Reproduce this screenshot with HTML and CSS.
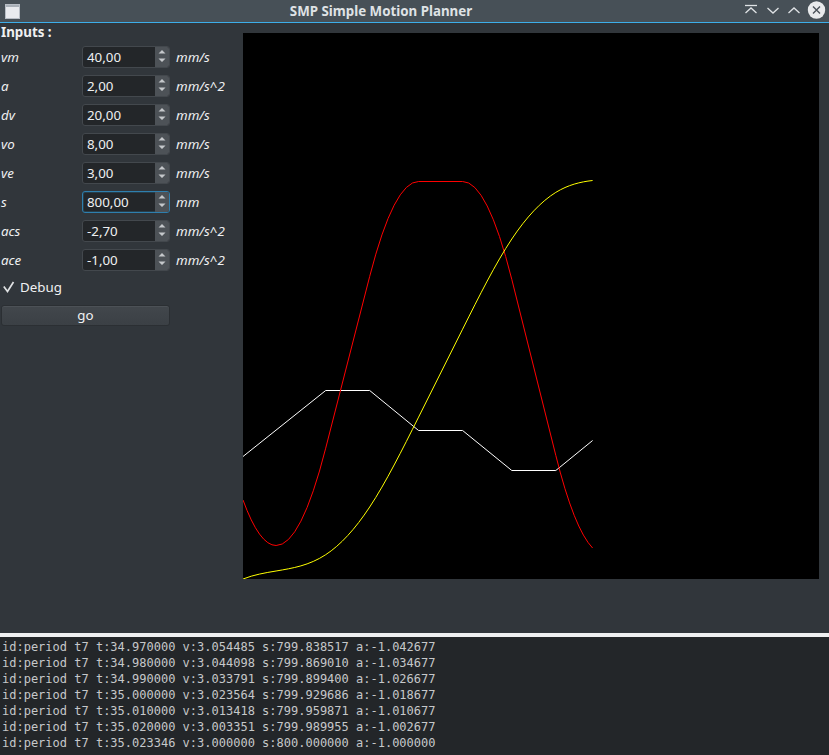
FILE: index.html
```html
<!DOCTYPE html>
<html>
<head>
<meta charset="utf-8">
<title>SMP Simple Motion Planner</title>
<link rel="stylesheet" href="styles.css">
</head>
<body>
<div class="window">
  <header class="titlebar">
    <div class="app-icon">
      <svg width="16" height="16" viewBox="0 0 16 16"><rect x="1.5" y="1.5" width="14" height="14" fill="#e9ebef" stroke="#b8bec6"/><rect x="2" y="2" width="13" height="2" fill="#a9b0b8"/></svg>
    </div>
    <div class="title">SMP Simple Motion Planner</div>
    <div class="controls">
      <svg width="89" height="22" viewBox="740 0 89 22">
        <g fill="none" stroke="#dfe2e5" stroke-width="1.3">
          <path d="M745 5.5 H757"/>
          <path d="M745.5 13 L751 8 L756.5 13"/>
          <path d="M767.5 8 L773 13 L778.5 8"/>
          <path d="M788.5 13 L794 8 L799.5 13"/>
        </g>
        <circle cx="816.5" cy="10" r="8.7" fill="#e8eaec"/>
        <path d="M813 6.5 L820 13.5 M820 6.5 L813 13.5" stroke="#4a5159" stroke-width="1.4"/>
      </svg>
    </div>
  </header>
  <main class="main">
    <section class="side">
      <div class="heading">Inputs :</div>
      <div class="form">
        <span class="lbl">vm</span>
        <div class="spin"><span class="val">40,00</span><span class="arrows"><svg width="14" height="20" viewBox="0 0 14 20"><path d="M3.5 6.5 L7 3 L10.5 6.5Z M3.5 11.5 L7 15 L10.5 11.5Z" fill="#c5c8cb"/></svg></span></div>
        <span class="unit">mm/s</span>

        <span class="lbl">a</span>
        <div class="spin"><span class="val">2,00</span><span class="arrows"><svg width="14" height="20" viewBox="0 0 14 20"><path d="M3.5 6.5 L7 3 L10.5 6.5Z M3.5 11.5 L7 15 L10.5 11.5Z" fill="#c5c8cb"/></svg></span></div>
        <span class="unit">mm/s^2</span>

        <span class="lbl">dv</span>
        <div class="spin"><span class="val">20,00</span><span class="arrows"><svg width="14" height="20" viewBox="0 0 14 20"><path d="M3.5 6.5 L7 3 L10.5 6.5Z M3.5 11.5 L7 15 L10.5 11.5Z" fill="#c5c8cb"/></svg></span></div>
        <span class="unit">mm/s</span>

        <span class="lbl">vo</span>
        <div class="spin"><span class="val">8,00</span><span class="arrows"><svg width="14" height="20" viewBox="0 0 14 20"><path d="M3.5 6.5 L7 3 L10.5 6.5Z M3.5 11.5 L7 15 L10.5 11.5Z" fill="#c5c8cb"/></svg></span></div>
        <span class="unit">mm/s</span>

        <span class="lbl">ve</span>
        <div class="spin"><span class="val">3,00</span><span class="arrows"><svg width="14" height="20" viewBox="0 0 14 20"><path d="M3.5 6.5 L7 3 L10.5 6.5Z M3.5 11.5 L7 15 L10.5 11.5Z" fill="#c5c8cb"/></svg></span></div>
        <span class="unit">mm/s</span>

        <span class="lbl">s</span>
        <div class="spin focus"><span class="val">800,00</span><span class="arrows"><svg width="14" height="20" viewBox="0 0 14 20"><path d="M3.5 6.5 L7 3 L10.5 6.5Z M3.5 11.5 L7 15 L10.5 11.5Z" fill="#c5c8cb"/></svg></span></div>
        <span class="unit">mm</span>

        <span class="lbl">acs</span>
        <div class="spin"><span class="val">-2,70</span><span class="arrows"><svg width="14" height="20" viewBox="0 0 14 20"><path d="M3.5 6.5 L7 3 L10.5 6.5Z M3.5 11.5 L7 15 L10.5 11.5Z" fill="#c5c8cb"/></svg></span></div>
        <span class="unit">mm/s^2</span>

        <span class="lbl">ace</span>
        <div class="spin"><span class="val">-1,00</span><span class="arrows"><svg width="14" height="20" viewBox="0 0 14 20"><path d="M3.5 6.5 L7 3 L10.5 6.5Z M3.5 11.5 L7 15 L10.5 11.5Z" fill="#c5c8cb"/></svg></span></div>
        <span class="unit">mm/s^2</span>
      </div>
      <div class="check">
        <svg class="tick" width="14" height="14" viewBox="0 0 14 14"><path d="M1.8 6.5 L5.5 11.5 L11.5 2" fill="none" stroke="#dfe1e3" stroke-width="1.7"/></svg>
        <span>Debug</span>
      </div>
      <button class="go">go</button>
    </section>
    <section class="plot">
      <svg class="canvas" width="576" height="546" viewBox="243 33 576 546">
        <rect x="243" y="33" width="576" height="546" fill="#000"/>
        <polyline fill="none" stroke="#ffffff" stroke-width="1" points="243,456.5 325.7,390.5 369.7,390.5 418.6,430.5 462.6,430.5 511.8,470.5 555.8,470.5 592.6,440.5"/>
        <path fill="none" stroke="#ff0000" stroke-width="1" d="M243,500 Q259.55,545.5 276.1,545.5 Q300.9,545.5 325.7,448.2 L369.7,276.4 Q394.15,181.5 418.6,181.5 L462.6,181.5 Q487.2,181.5 511.8,279.4 L555.8,455.4 Q574.2,529 592.6,548"/>
        <path fill="none" stroke="#ffff00" stroke-width="1" d="M243,579 C254.03,574.67 265.07,572.83 276.1,571 C292.63,568.25 309.17,565.5 325.7,554.7 C340.37,545.12 355.03,529.26 369.7,507 C386,482.26 402.3,449.66 418.6,417.1 L462.6,329.2 C479,296.44 495.4,263.64 511.8,239 C526.47,216.96 541.13,201.45 555.8,192.4 C568.07,184.83 580.33,181.85 592.6,180.5"/>
      </svg>
    </section>
  </main>
  <div class="splitter"></div>
  <pre class="console">id:period t7 t:34.970000 v:3.054485 s:799.838517 a:-1.042677
id:period t7 t:34.980000 v:3.044098 s:799.869010 a:-1.034677
id:period t7 t:34.990000 v:3.033791 s:799.899400 a:-1.026677
id:period t7 t:35.000000 v:3.023564 s:799.929686 a:-1.018677
id:period t7 t:35.010000 v:3.013418 s:799.959871 a:-1.010677
id:period t7 t:35.020000 v:3.003351 s:799.989955 a:-1.002677
id:period t7 t:35.023346 v:3.000000 s:800.000000 a:-1.000000</pre>
</div>
</body>
</html>
```

FILE: styles.css
```css
* {
  box-sizing: border-box;
}

html,
body {
  margin: 0;
  padding: 0;
}

body {
  width: 829px;
  height: 755px;
  overflow: hidden;
  background: #31363b;
  font-family: "Noto Sans", "DejaVu Sans", sans-serif;
  font-size: 13.333px;
  color: #eff0f1;
}

.window {
  display: flex;
  flex-direction: column;
  height: 755px;
}

.titlebar {
  flex: none;
  height: 23px;
  display: flex;
  align-items: center;
  background: #475057;
  border-bottom: 1px solid #3daee9;
}

.app-icon {
  width: 22px;
  height: 22px;
  display: flex;
  align-items: center;
  justify-content: center;
  padding-left: 1px;
}

.app-icon svg {
  display: block;
}

.title {
  flex: 1;
  text-align: center;
  font-weight: bold;
  color: #dfe2e5;
  line-height: 22px;
}

.controls {
  width: 89px;
  height: 22px;
}

.controls svg {
  display: block;
}

.main {
  flex: none;
  height: 610px;
  display: flex;
}

.side {
  flex: none;
  width: 243px;
  padding: 1px 0 0 1px;
  display: flex;
  flex-direction: column;
}

.heading {
  font-weight: bold;
  line-height: 16px;
  height: 16px;
}

.form {
  margin-top: 6px;
  display: grid;
  grid-template-columns: 81px 88px auto;
  row-gap: 7px;
  align-items: center;
}

.lbl {
  font-style: italic;
  line-height: 16px;
}

.spin {
  height: 22px;
  display: flex;
  border: 1px solid #43484d;
  border-radius: 3px;
  background: #232629;
  overflow: hidden;
}

.spin.focus {
  border-color: #2e7fae;
  box-shadow: inset 0 0 0 1px rgba(61, 174, 233, 0.18);
}

.val {
  flex: 1;
  padding-left: 4px;
  line-height: 20px;
}

.arrows {
  width: 14px;
  height: 20px;
  background: #4d5257;
}

.arrows svg {
  display: block;
}

.unit {
  font-style: italic;
  padding-left: 6px;
  line-height: 16px;
}

.check {
  margin-top: 7px;
  height: 18px;
  display: flex;
  align-items: center;
  gap: 4px;
  padding-left: 1px;
}

.tick {
  display: block;
}

.go {
  margin-top: 9px;
  width: 169px;
  height: 21px;
  padding: 0;
  font: inherit;
  color: #eff0f1;
  background: linear-gradient(#42474c, #3b4045);
  border: 1px solid #2b2f33;
  border-radius: 3px;
  box-shadow: inset 0 1px 0 #4c5156;
  line-height: 19px;
}

.plot {
  flex: 1;
  padding-top: 10px;
}

.canvas {
  display: block;
}

.splitter {
  flex: none;
  height: 4px;
  background: #eff0f1;
}

.console {
  flex: 1;
  margin: 0;
  padding: 2px 0 0 2px;
  background: #232629;
  color: #c6c8ca;
  font-family: "DejaVu Sans Mono", "Liberation Mono", monospace;
  font-size: 12px;
  line-height: 16px;
  overflow: hidden;
}
```
